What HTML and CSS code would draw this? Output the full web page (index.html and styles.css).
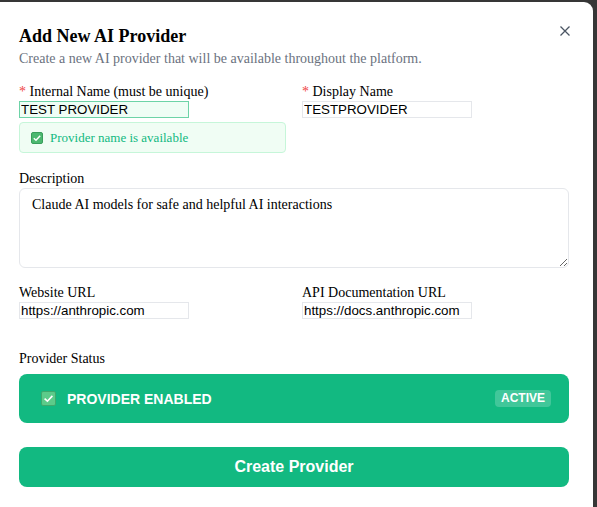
FILE: index.html
```html
<!DOCTYPE html>
<html>
<head>
<meta charset="utf-8">
<link rel="stylesheet" href="styles.css">
</head>
<body>
<div class="backdrop">
  <div class="modal">
    <button class="close" aria-label="Close">
      <svg width="10" height="10" viewBox="0 0 10 10"><path d="M0.5 0.5 L9.5 9.5 M9.5 0.5 L0.5 9.5" stroke="#4b5563" stroke-width="1.3" fill="none"/></svg>
    </button>
    <h2 class="title">Add New AI Provider</h2>
    <p class="subtitle">Create a new AI provider that will be available throughout the platform.</p>

    <div class="row row-names">
      <div class="field">
        <label class="label"><span class="req">*</span> Internal Name (must be unique)</label>
        <input class="input input-ok" type="text" value="TEST PROVIDER">
        <div class="avail">
          <svg class="chk chk-sm" viewBox="0 0 12 12"><rect x="0.5" y="0.5" width="11" height="11" rx="1.5" fill="#4cb870" stroke="#3a9e5c"/><path d="M2.8 6.2 L5 8.2 L9.2 3.8" stroke="#fff" stroke-width="1.5" fill="none"/></svg>
          <span>Provider name is available</span>
        </div>
      </div>
      <div class="field">
        <label class="label"><span class="req">*</span> Display Name</label>
        <input class="input" type="text" value="TESTPROVIDER">
      </div>
    </div>

    <div class="field field-desc">
      <label class="label">Description</label>
      <textarea class="textarea">Claude AI models for safe and helpful AI interactions</textarea>
    </div>

    <div class="row row-urls">
      <div class="field">
        <label class="label">Website URL</label>
        <input class="input" type="text" value="https://anthropic.com">
      </div>
      <div class="field">
        <label class="label">API Documentation URL</label>
        <input class="input" type="text" value="https://docs.anthropic.com">
      </div>
    </div>

    <div class="status">
      <div class="label label-status">Provider Status</div>
      <div class="status-bar">
        <div class="status-left">
          <svg class="chk chk-lg" viewBox="0 0 15 15"><rect x="0.5" y="0.5" width="14" height="14" rx="1.5" fill="#5ccb8a" stroke="#3fa86c"/><path d="M3.6 7.7 L6.4 10.2 L11.4 4.9" stroke="#fff" stroke-width="1.6" fill="none"/></svg>
          <span class="status-text">PROVIDER ENABLED</span>
        </div>
        <span class="badge">ACTIVE</span>
      </div>
    </div>

    <button class="create">Create Provider</button>
  </div>
</div>
</body>
</html>
```

FILE: styles.css
```css
html, body {
  margin: 0;
  padding: 0;
  height: 100%;
  overflow: hidden;
  background: #363636;
}

.backdrop {
  padding-top: 2px;
  padding-right: 4px;
  height: 100%;
  box-sizing: border-box;
}

.modal {
  position: relative;
  background: #fff;
  margin-left: -5px;
  border-top-right-radius: 9px;
  padding: 22px 24px 40px 24px;
  min-height: 600px;
  font-family: "Liberation Serif", "Times New Roman", serif;
  color: #000;
}

.close {
  position: absolute;
  top: 24px;
  right: 23px;
  padding: 0;
  margin: 0;
  border: 0;
  background: transparent;
  width: 10px;
  height: 10px;
  display: flex;
}

.title {
  margin: 0;
  font-size: 18px;
  line-height: 24px;
  font-weight: bold;
}

.subtitle {
  margin: 1px 0 0 0;
  font-size: 14px;
  line-height: 20px;
  color: #6b7280;
}

.row {
  display: grid;
  grid-template-columns: 1fr 1fr;
  column-gap: 16px;
}

.row-names {
  margin-top: 15px;
}

.field {
  display: flex;
  flex-direction: column;
  align-items: flex-start;
}

.label {
  display: block;
  font-size: 14px;
  line-height: 16px;
  margin-bottom: 1px;
}

.req {
  color: #ef4444;
}

.input {
  box-sizing: border-box;
  width: 170px;
  height: 17px;
  margin: 0;
  padding: 0 1px;
  border: 1px solid #e5e7eb;
  background: #fff;
  font-family: "Liberation Sans", Arial, sans-serif;
  font-size: 13.33px;
  color: #000;
  outline: none;
}

.input-ok {
  border-color: #6dd3a7;
  background: #effdf5;
}

.avail {
  box-sizing: border-box;
  margin-top: 4px;
  width: 100%;
  height: 31px;
  display: flex;
  align-items: center;
  gap: 7px;
  padding: 0 10px 0 11px;
  border: 1px solid #c6f6d9;
  border-radius: 4px;
  background: #f0fdf4;
  font-size: 13px;
  color: #10b981;
}

.chk {
  flex: none;
  display: block;
}

.chk-sm {
  width: 12px;
  height: 12px;
}

.chk-lg {
  width: 15px;
  height: 15px;
}

.field-desc {
  margin-top: 18px;
  align-items: stretch;
}

.textarea {
  box-sizing: border-box;
  height: 80px;
  margin: 0;
  padding: 8px 12px;
  border: 1px solid #e5e7eb;
  border-radius: 6px;
  font-family: "Liberation Serif", "Times New Roman", serif;
  font-size: 14px;
  line-height: 16px;
  color: #000;
  resize: vertical;
  outline: none;
}

.row-urls {
  margin-top: 17px;
}

.status {
  margin-top: 32px;
}

.label-status {
  margin-bottom: 7px;
}

.status-bar {
  box-sizing: border-box;
  height: 49px;
  border-radius: 8px;
  background: #12b981;
  display: flex;
  align-items: center;
  justify-content: space-between;
  padding: 0 18px 0 22px;
  color: #fff;
  font-family: "Liberation Sans", Arial, sans-serif;
}

.status-left {
  display: flex;
  align-items: center;
  gap: 11px;
}

.status-text {
  font-size: 14px;
  font-weight: bold;
  line-height: 16px;
}

.badge {
  font-size: 12px;
  font-weight: bold;
  line-height: 17px;
  padding: 0 6px;
  border-radius: 4px;
  background: rgba(255, 255, 255, 0.2);
}

.create {
  display: block;
  box-sizing: border-box;
  width: 100%;
  height: 40px;
  margin: 24px 0 0 0;
  padding: 0;
  border: 0;
  border-radius: 8px;
  background: #12b981;
  color: #fff;
  font-family: "Liberation Sans", Arial, sans-serif;
  font-size: 16px;
  font-weight: bold;
}
```
